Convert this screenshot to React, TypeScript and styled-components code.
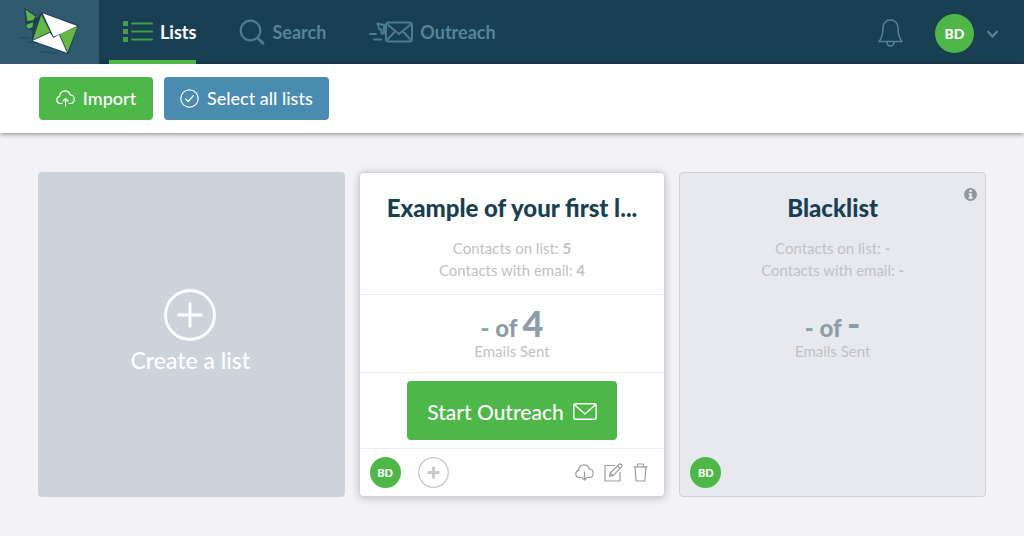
import React from "react";
import styled, { createGlobalStyle, css } from "styled-components";

const navy = "#193f52";
const green = "#4db748";

const GlobalStyle = createGlobalStyle`
  *, *::before, *::after { box-sizing: border-box; }
  body {
    margin: 0;
    background: #f2f2f7;
    font-family: Lato, "Open Sans", sans-serif;
    color: ${navy};
  }
  button { font-family: inherit; cursor: pointer; }
  svg { display: block; flex: none; }
`;

const Header = styled.header`
  display: flex;
  height: 64px;
  background: ${navy};
`;

const LogoLink = styled.a`
  display: block;
  width: 99px;
  background: #305a6e;
`;

const Nav = styled.nav`
  display: flex;
  gap: 29px;
  padding-left: 10px;
`;

const NavItem = styled.a<{ $active?: boolean }>`
  display: flex;
  align-items: center;
  gap: 7px;
  padding: 4px 0 0 14px;
  border-bottom: 4px solid ${(p) => (p.$active ? green : "transparent")};
  color: ${(p) => (p.$active ? "#fff" : "#55859a")};
  font-size: 18px;
  font-weight: 700;
  text-decoration: none;
`;

const Account = styled.div`
  display: flex;
  align-items: center;
  margin-left: auto;
  padding: 2px 25px 0 0;
`;

const IconButton = styled.button`
  display: flex;
  align-items: center;
  padding: 0;
  border: 0;
  background: none;
  color: inherit;
`;

const AccountButton = styled(IconButton)`
  gap: 12px;
  margin-left: 32px;
`;

const Avatar = styled.span<{ $large?: boolean }>`
  display: flex;
  align-items: center;
  justify-content: center;
  width: ${(p) => (p.$large ? 39 : 31)}px;
  height: ${(p) => (p.$large ? 39 : 31)}px;
  border-radius: 50%;
  background: ${green};
  color: #fff;
  font-size: ${(p) => (p.$large ? 14 : 11)}px;
  font-weight: 900;
`;

const Toolbar = styled.div`
  display: flex;
  gap: 11px;
  padding: 13px 39px;
  background: #fff;
  box-shadow: 0 1px 5px rgba(0, 0, 0, 0.45);
`;

const ToolButton = styled.button<{ $blue?: boolean }>`
  display: flex;
  align-items: center;
  justify-content: center;
  gap: 8px;
  min-width: 114px;
  height: 43px;
  padding: 0 16px 1px;
  border: 0;
  border-radius: 4px;
  background: ${(p) => (p.$blue ? "#4a8bb0" : green)};
  color: #fff;
  font-size: 18px;
  font-weight: 500;
`;

const Board = styled.main`
  display: grid;
  grid-template-columns: repeat(3, 1fr);
  gap: 14px;
  padding: 39px 38px;
`;

const CreateCard = styled.button`
  display: flex;
  flex-direction: column;
  align-items: center;
  justify-content: center;
  gap: 4px;
  min-height: 325px;
  padding: 0 2px 5px 0;
  border: 0;
  border-radius: 4px;
  background: #ccd3db;
  color: #fff;
  font-size: 23px;
  font-weight: 500;
  line-height: 30px;
`;

const Card = styled.article<{ $muted?: boolean }>`
  position: relative;
  display: flex;
  flex-direction: column;
  min-width: 0;
  border: 1px solid ${(p) => (p.$muted ? "#cfd2d8" : "#d2d2d8")};
  border-radius: 4px;
  background: ${(p) => (p.$muted ? "#e8e9ee" : "#fff")};
  ${(p) =>
    !p.$muted &&
    css`
      box-shadow: 0 1px 8px rgba(0, 0, 0, 0.22);
    `}
`;

const Section = styled.div<{ $ruled?: boolean }>`
  border-top: 1px solid ${(p) => (p.$ruled ? "#ebeef2" : "transparent")};
  text-align: center;
`;

const Summary = styled(Section)`
  height: 121px;
  padding: 19px 24px 0;
`;

const Title = styled.h2`
  margin: 0 0 14px;
  font-size: 24px;
  line-height: 30px;
  font-weight: 900;
  white-space: nowrap;
`;

const Detail = styled.p`
  margin: 0;
  color: #bfc1c7;
  font-size: 15px;
  line-height: 22px;
`;

const Stats = styled(Section)`
  height: 78px;
  padding-top: 14px;
`;

const Count = styled.p`
  margin: 0;
  color: #8c9ea5;
  font-size: 24px;
  line-height: 28px;
  font-weight: 900;
`;

const Total = styled.span`
  font-size: 36px;
`;

const StatLabel = styled(Detail)`
  line-height: 18px;
`;

const Action = styled(Section)`
  display: flex;
  justify-content: center;
  height: 76px;
  padding-top: 8px;
`;

const StartButton = styled.button`
  display: flex;
  align-items: center;
  gap: 9px;
  height: 59px;
  padding: 2px 20px 0;
  border: 0;
  border-radius: 4px;
  background: ${green};
  color: #fff;
  font-size: 21px;
  font-weight: 500;
`;

const Footer = styled.footer<{ $ruled?: boolean }>`
  display: flex;
  align-items: center;
  gap: 17px;
  height: 48px;
  margin-top: auto;
  padding: 0 16px 0 10px;
  border-top: 1px solid ${(p) => (p.$ruled ? "#ebeef2" : "transparent")};
`;

const Tools = styled.div`
  display: flex;
  align-items: center;
  gap: 10px;
  margin-left: auto;
  color: #989ca2;
`;

const InfoButton = styled(IconButton)`
  position: absolute;
  top: 15px;
  right: 8px;
`;

const Logo = () => (
  <svg width="99" height="64" viewBox="0 0 297 192" aria-hidden="true">
    <g stroke="#264d61" strokeWidth="5" strokeLinecap="round">
      <path d="M58 113H88M84 127H112M124 154L170 160" fill="none" />
    </g>
    <path
      d="M75 27L106 46L104 64L126 39L233 76L204 160L97 123L100 90L80 84L78 66Z"
      fill="#1d4256"
      stroke="#1d4256"
      strokeWidth="4"
      strokeLinejoin="round"
    />
    <path d="M77 30L106 49L100 61L82 63Z" fill="#5fb543" />
    <path d="M80 74L99 67L98 80L88 86L80 82Z" fill="#5fb543" />
    <path d="M124 44L150 95L99 119Z" fill="#66b642" />
    <path d="M232 80L203 156L178 101Z" fill="#66b642" />
    <path d="M128 40L232 78L161 110Z" fill="#fff" />
    <path d="M98 122L150 98L160 114L177 104L201 158Z" fill="#fff" />
  </svg>
);

const ListIcon = () => (
  <svg width="30" height="22" viewBox="0 0 30 22" fill="#43a047" aria-hidden="true">
    <path d="M0 0H5V5H0ZM0 8H5V13H0ZM0 16H5V21H0Z" />
    <path d="M9 2.5H29M9 10.5H29M9 18.5H29" stroke="#43a047" strokeWidth="2" strokeLinecap="round" />
  </svg>
);

const SearchIcon = () => (
  <svg width="26" height="26" viewBox="0 0 26 26" fill="none" stroke="#4d7b90" strokeWidth="2.2" strokeLinecap="round" aria-hidden="true">
    <circle cx="11.5" cy="11.5" r="9.8" />
    <path d="M18.7 19L24 24.3" strokeWidth="2.8" />
  </svg>
);

const OutreachIcon = () => (
  <svg width="44" height="22" viewBox="0 0 44 22" fill="none" stroke="#4d7b90" strokeWidth="2" strokeLinecap="round" strokeLinejoin="round" aria-hidden="true">
    <rect x="17" y="1.5" width="26" height="19" rx="2.5" />
    <path d="M19 4L30 13L41 4M19 18L26 10.5M41 18L34 10.5" />
    <path d="M1 13H7M5 18.5H12" />
    <path d="M8.5 2.5L15 4V12.5H12.5V8.5H10.5Z" />
  </svg>
);

const BellIcon = () => (
  <svg width="25" height="29" viewBox="0 0 25 29" fill="none" stroke="#55829a" strokeWidth="1.5" strokeLinejoin="round" aria-hidden="true">
    <path d="M12.5 1C8 1 5 4.3 5 9C5 16 4 19 1 22.5H24C21 19 20 16 20 9C20 4.3 17 1 12.5 1Z" />
    <path d="M9 23C9 28.3 16 28.3 16 23" />
  </svg>
);

const ChevronIcon = () => (
  <svg width="13" height="10" viewBox="0 0 13 10" fill="none" stroke="#5f8396" strokeWidth="2.2" aria-hidden="true">
    <path d="M1.5 3L6.5 8.5L11.5 3" />
  </svg>
);

const CloudIcon = ({ down }: { down?: boolean }) => (
  <svg width="19" height="17" viewBox="0 0 19 17" fill="none" stroke="currentColor" strokeWidth="1.2" strokeLinecap="round" strokeLinejoin="round" aria-hidden="true">
    <path d="M6 13.5H4.5C2.3 13.5 0.8 12 0.8 9.9C0.8 8.2 1.9 6.8 3.6 6.4C3.6 3.3 5.9 0.9 8.9 0.9C11.4 0.9 13.5 2.4 14.2 4.9C16.6 5.1 18.2 6.9 18.2 9.2C18.2 11.7 16.5 13.5 14 13.5H13" />
    <path d={down ? "M9.5 8V16M7 13.5L9.5 16L12 13.5" : "M9.5 16V8.5M7 11L9.5 8.5L12 11"} />
  </svg>
);

const CheckIcon = () => (
  <svg width="19" height="19" viewBox="0 0 19 19" fill="none" stroke="currentColor" strokeWidth="1.2" strokeLinecap="round" strokeLinejoin="round" aria-hidden="true">
    <circle cx="9.5" cy="9.5" r="8.7" />
    <path d="M5.5 9.8L8.2 12.5L13.5 6.5" />
  </svg>
);

const CirclePlusIcon = () => (
  <svg width="52" height="52" viewBox="0 0 52 52" fill="none" stroke="currentColor" strokeWidth="2.8" aria-hidden="true">
    <circle cx="26" cy="26" r="24.5" />
    <path d="M26 13.5V38.5M13.5 26H38.5" />
  </svg>
);

const AddIcon = () => (
  <svg width="31" height="31" viewBox="0 0 31 31" fill="none" stroke="#c7c9ce" aria-hidden="true">
    <circle cx="15.5" cy="15.5" r="14.8" strokeWidth="1.3" />
    <path d="M15.5 9.5V21.5M9.5 15.5H21.5" strokeWidth="2.8" />
  </svg>
);

const MailIcon = () => (
  <svg width="24" height="17" viewBox="0 0 24 17" fill="none" stroke="currentColor" strokeWidth="1.4" strokeLinejoin="round" aria-hidden="true">
    <rect x="0.8" y="0.8" width="22.4" height="15.4" rx="1.5" />
    <path d="M1.5 1.8L12 11L22.5 1.8" />
  </svg>
);

const EditIcon = () => (
  <svg width="19" height="19" viewBox="0 0 19 19" fill="none" stroke="currentColor" strokeWidth="1.2" strokeLinejoin="round" aria-hidden="true">
    <path d="M11 2.5H1V18H16V9" />
    <path d="M5.5 13.5L6.3 10L15.2 1.2C16.5 0 19 2.3 17.7 3.8L9 12.7ZM13.5 3L16 5.5M6.3 10L9 12.7" />
  </svg>
);

const TrashIcon = () => (
  <svg width="15" height="19" viewBox="0 0 15 19" fill="none" stroke="currentColor" strokeWidth="1.2" strokeLinejoin="round" aria-hidden="true">
    <path d="M0.5 3.8H14.5M4.5 3.8V1H10.5V3.8M2 4L3.2 18H11.8L13 4" />
  </svg>
);

const InfoIcon = () => (
  <svg width="13" height="13" viewBox="0 0 13 13" aria-hidden="true">
    <circle cx="6.5" cy="6.5" r="6.5" fill="#8f979f" />
    <path d="M5.5 2H7.7V4H5.5ZM4.5 5.2H7.7V9.2H8.6V10.7H4.5V9.2H5.5V6.6H4.5Z" fill="#f0f1f4" />
  </svg>
);

type ListInfo = {
  title: string;
  contacts: string;
  emails: string;
  total: string;
  muted?: boolean;
};

const lists: ListInfo[] = [
  { title: "Example of your first l...", contacts: "5", emails: "4", total: "4" },
  { title: "Blacklist", contacts: "-", emails: "-", total: "-", muted: true },
];

const ListCard = ({ title, contacts, emails, total, muted }: ListInfo) => (
  <Card $muted={muted}>
    <Summary>
      <Title>{title}</Title>
      <Detail>Contacts on list: <b>{contacts}</b></Detail>
      <Detail>Contacts with email: <b>{emails}</b></Detail>
    </Summary>
    <Stats $ruled={!muted}>
      <Count>- of <Total>{total}</Total></Count>
      <StatLabel>Emails Sent</StatLabel>
    </Stats>
    {!muted && (
      <Action $ruled>
        <StartButton type="button">Start Outreach <MailIcon /></StartButton>
      </Action>
    )}
    <Footer $ruled={!muted}>
      <Avatar>BD</Avatar>
      {!muted && (
        <>
          <IconButton type="button" aria-label="Add a member"><AddIcon /></IconButton>
          <Tools>
            <IconButton type="button" aria-label="Download"><CloudIcon down /></IconButton>
            <IconButton type="button" aria-label="Edit"><EditIcon /></IconButton>
            <IconButton type="button" aria-label="Delete"><TrashIcon /></IconButton>
          </Tools>
        </>
      )}
    </Footer>
    {muted && <InfoButton type="button" aria-label="About this list"><InfoIcon /></InfoButton>}
  </Card>
);

export default function App() {
  return (
    <>
      <GlobalStyle />
      <Header>
        <LogoLink href="#" aria-label="Home"><Logo /></LogoLink>
        <Nav>
          <NavItem href="#lists" $active><ListIcon />Lists</NavItem>
          <NavItem href="#search"><SearchIcon />Search</NavItem>
          <NavItem href="#outreach"><OutreachIcon />Outreach</NavItem>
        </Nav>
        <Account>
          <IconButton type="button" aria-label="Notifications"><BellIcon /></IconButton>
          <AccountButton type="button" aria-label="Account menu">
            <Avatar $large>BD</Avatar>
            <ChevronIcon />
          </AccountButton>
        </Account>
      </Header>
      <Toolbar>
        <ToolButton type="button"><CloudIcon />Import</ToolButton>
        <ToolButton type="button" $blue><CheckIcon />Select all lists</ToolButton>
      </Toolbar>
      <Board>
        <CreateCard type="button"><CirclePlusIcon />Create a list</CreateCard>
        {lists.map((list) => <ListCard key={list.title} {...list} />)}
      </Board>
    </>
  );
}
